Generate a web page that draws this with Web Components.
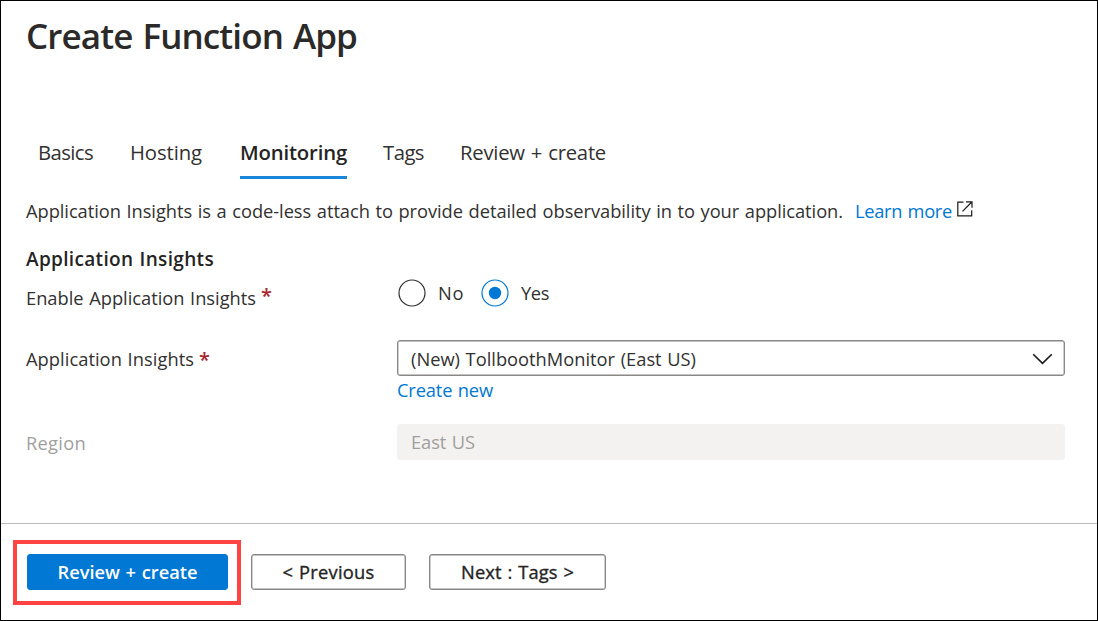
<!DOCTYPE html>
<html lang="en">
<head>
<meta charset="utf-8">
<title>Create Function App</title>
<style>
html,body{margin:0;height:100%;background:#fff}
body{font-family:"Open Sans","Noto Sans",sans-serif;font-size:18.3px;color:#323130;overflow:hidden}
</style>
</head>
<body>
<function-wizard></function-wizard>
<script>
const define=(name,html,setup)=>{
  const t=document.createElement('template');
  t.innerHTML=html;
  customElements.define(name,class extends HTMLElement{
    constructor(){super();this.attachShadow({mode:'open'}).append(t.content.cloneNode(true));}
    connectedCallback(){if(setup)setup.call(this,this.shadowRoot);}
  });
};

/* Text whose tracking is adjusted so that it spans the given width. */
define('fit-text',`<style>:host{display:inline-block;white-space:pre;word-spacing:.05em}span{display:inline-block}</style><span><slot></slot></span>`,function(root){
  const s=root.querySelector('span'),want=+this.getAttribute('w');
  if(!want)return;
  const n=this.textContent.length;
  const have=s.getBoundingClientRect().width;
  s.style.letterSpacing=((want-have)/n)+'px';
  this.style.width=want+'px';
});

define('page-title',`<style>:host{display:block;height:68px;line-height:70px;font-size:35px;font-weight:600;color:#2b2a29}h1{font:inherit;margin:0}</style><h1><slot></slot></h1>`);

define('wizard-tabs',`<style>:host{display:flex;height:51px;margin-top:59px;padding-left:12px}</style><slot></slot>`);
define('wizard-tab',`<style>:host{display:block;box-sizing:border-box;height:51px;line-height:49px;font-size:20.3px;border-bottom:3px solid transparent}
:host([active]){font-weight:600;border-bottom:3px solid #1a86d9;color:#252423}</style><slot></slot>`);

define('app-link',`<style>:host{display:inline-block;color:#0078d4}a{color:inherit;text-decoration:none}</style><a><slot></slot></a>`);
define('info-line',`<style>:host{display:flex;height:37px;line-height:37px;margin-top:13px}svg{display:block;margin:9px 0 0 5px}app-link{margin-left:12px}</style>
<slot></slot><app-link><fit-text w="97">Learn more</fit-text></app-link>
<svg width="16" height="16" viewBox="0 0 16 16" fill="none" stroke="#1b1a19" stroke-width="1.2"><path d="M6.5 1.2H.8v13.6h13.9V9.2M9 .8h6v6M14.8 1L5.5 10.3"/></svg>`);

define('section-title',`<style>:host{display:block;height:30px;line-height:29px;margin-top:16px;font-size:19px;font-weight:600;color:#252423}</style><slot></slot>`);

define('form-row',`<style>:host{display:grid;grid-template-columns:371px 668px}
.l{display:flex;line-height:38px}:host([muted]) .l{color:#a19f9d}
i{display:none;font-style:normal;font-weight:600;color:#a4262c;font-size:20px;margin-left:5px;line-height:40px}
:host([required]) i{display:block}</style><div class="l"><slot name="label"></slot><i>*</i></div><div><slot></slot></div>`);

define('radio-option',`<style>:host{display:flex;align-items:center;height:27px;line-height:27px}
svg{display:block;margin-right:12px;color:#323130}circle+circle{display:none}
:host([checked]) svg{color:#0078d4}:host([checked]) circle+circle{display:block}</style>
<svg width="28" height="28" viewBox="0 0 28 28"><circle cx="14" cy="14" r="13" fill="none" stroke="currentColor" stroke-width="1.2"/><circle cx="14" cy="14" r="6.2" fill="currentColor"/></svg><slot></slot>`);
define('radio-set',`<style>:host{display:flex;padding-top:3px;margin-left:1px}::slotted(:last-child){margin-left:17px}</style><slot></slot>`);

define('select-box',`<style>:host{display:flex;justify-content:space-between;align-items:center;box-sizing:border-box;height:36px;border:1.5px solid #8a8886;box-shadow:inset 0 0 0 .4px #8a8886;border-radius:3px;padding:1px 11px 0 13px;line-height:34px}
:host([disabled]){background:#f3f2f1;border-color:#f3f2f1;box-shadow:none;color:#a19f9d;padding-top:0}:host([disabled]) svg{display:none}</style>
<slot></slot><svg width="21" height="12" viewBox="0 0 21 12" fill="none" stroke="#1b1a19" stroke-width="1.6"><path d="M1.2 1.2l9.3 9.2 9.3-9.2"/></svg>`);

define('push-button',`<style>:host{display:block}button{display:flex;align-items:center;justify-content:center;box-sizing:border-box;width:100%;height:36px;padding:0 0 2px;border:1px solid #8a8886;box-shadow:inset 0 0 0 .4px #8a8886;border-radius:3px;background:#fff;font:inherit;-webkit-text-stroke:.35px currentColor;color:#252423}
:host([primary]) button{background:#0078d4;border-color:#0078d4;box-shadow:none;color:#fff;font-weight:600;-webkit-text-stroke:0}</style><button><slot></slot></button>`);

define('red-outline',`<style>:host{display:block;box-sizing:border-box;width:228px;height:65px;border:4px solid #ff4343;padding:10px 9px 0 10px}</style><slot></slot>`);
define('wizard-footer',`<style>:host{display:flex;box-sizing:border-box;height:97px;border-top:1px solid #bdbcbb;padding:16px 0 0 12px}</style><slot></slot>`);

define('function-wizard',`<style>
:host{display:flex;flex-direction:column;box-sizing:border-box;width:1098px;height:621px;border:1px solid #000;background:#fff}
main{height:522px;box-sizing:border-box;padding-left:25px}
form-row.enable{height:64px;margin-top:1px}.ai{height:84px}.enable fit-text[slot]{margin-top:3px}.ai app-link{line-height:28px;display:block}
.enable i{margin-top:3px}.prev{width:155px;margin:14px 0 0 10px}.next{width:177px;margin:14px 0 0 23px}
wizard-tab+wizard-tab{margin-left:37px}
</style>
<main>
<page-title><fit-text w="331">Create Function App</fit-text></page-title>
<wizard-tabs>
<wizard-tab><fit-text w="55">Basics</fit-text></wizard-tab>
<wizard-tab><fit-text w="72">Hosting</fit-text></wizard-tab>
<wizard-tab active style="margin-left:38px"><fit-text w="107">Monitoring</fit-text></wizard-tab>
<wizard-tab style="margin-left:36px"><fit-text w="41">Tags</fit-text></wizard-tab>
<wizard-tab style="margin-left:36px"><fit-text w="146">Review + create</fit-text></wizard-tab>
</wizard-tabs>
<info-line><fit-text w="817">Application Insights is a code-less attach to provide detailed observability in to your application.</fit-text></info-line>
<section-title><fit-text w="188">Application Insights</fit-text></section-title>
<form-row class="enable" required><fit-text slot="label" w="230">Enable Application Insights</fit-text>
<radio-set><radio-option><fit-text w="26">No</fit-text></radio-option><radio-option checked><fit-text w="28">Yes</fit-text></radio-option></radio-set></form-row>
<form-row class="ai" required><fit-text slot="label" w="168">Application Insights</fit-text>
<select-box><fit-text w="285">(New) TollboothMonitor (East US)</fit-text></select-box><app-link><fit-text w="96">Create new</fit-text></app-link></form-row>
<form-row muted><fit-text slot="label" w="60">Region</fit-text><select-box disabled><fit-text w="64">East US</fit-text></select-box></form-row>
</main>
<wizard-footer>
<red-outline><push-button primary><fit-text w="140">Review + create</fit-text></push-button></red-outline>
<push-button class="prev"><fit-text w="92">&lt; Previous</fit-text></push-button>
<push-button class="next"><fit-text w="113">Next : Tags &gt;</fit-text></push-button>
</wizard-footer>`);
</script>
</body>
</html>
